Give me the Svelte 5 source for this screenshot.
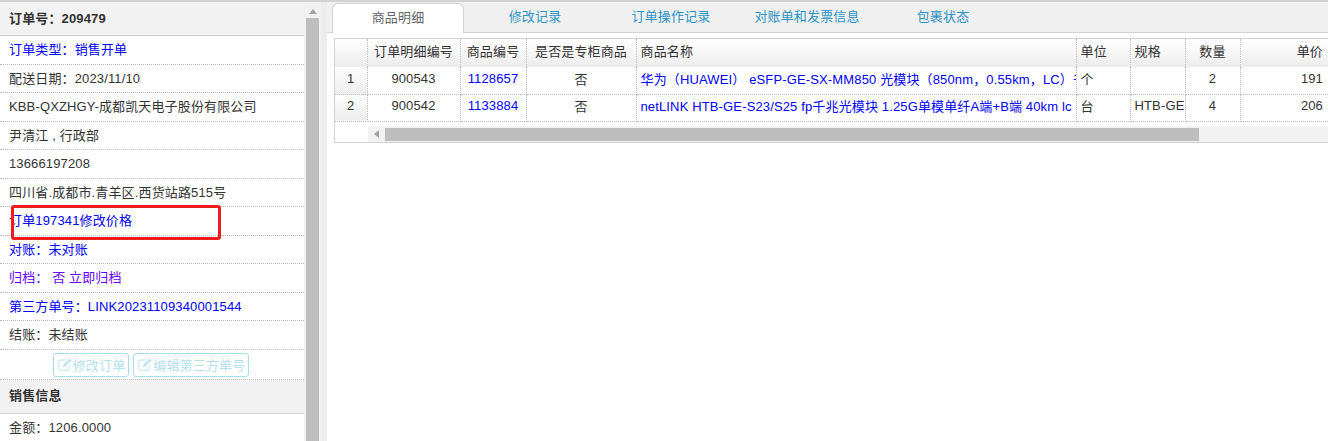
<script lang="ts">
	const rows = [
		{ text: '订单类型：销售开单', tone: 'blue' },
		{ text: '配送日期：2023/11/10' },
		{ text: 'KBB-QXZHGY-成都凯天电子股份有限公司' },
		{ text: '尹清江 , 行政部' },
		{ text: '13666197208' },
		{ text: '四川省.成都市.青羊区.西货站路515号' },
		{ text: '订单197341修改价格', tone: 'blue' },
		{ text: '对账：未对账', tone: 'blue' },
		{ text: '归档： 否 立即归档', tone: 'purple' },
		{ text: '第三方单号：LINK20231109340001544', tone: 'blue' },
		{ text: '结账：未结账' }
	];

	const tabs = ['商品明细', '修改记录', '订单操作记录', '对账单和发票信息', '包裹状态'];

	const items = [
		{
			id: '900543',
			sku: '1128657',
			name: '华为（HUAWEI） eSFP-GE-SX-MM850 光模块（850nm，0.55km，LC）千兆多模光模块',
			unit: '个',
			spec: '',
			qty: 2,
			price: 191
		},
		{
			id: '900542',
			sku: '1133884',
			name: 'netLINK HTB-GE-S23/S25 fp千兆光模块 1.25G单模单纤A端+B端 40km lc 一对',
			unit: '台',
			spec: 'HTB-GE-S23/S25',
			qty: 4,
			price: 206
		}
	];
</script>

{#snippet editIcon()}
	<svg viewBox="0 0 15 15" width="15" height="15" aria-hidden="true">
		<path d="M11.500 8.500v3.400c0 1-.7 1.600-1.600 1.600H2.600c-1 0-1.600-.6-1.600-1.600V4.600C1 3.700 1.600 3 2.600 3H8" fill="none" stroke="#cfe9f2" stroke-width="1.300" />
		<path d="M4.600 10.400 5.200 7.800 11.600 1.400 13.600 3.400 7.200 9.800Z" fill="#c4e5ef" />
	</svg>
{/snippet}

<div class="page">
	<aside class="order">
		<h2>订单号：209479</h2>
		{#each rows as row}
			<div class="row {row.tone ?? ''}">{row.text}</div>
		{/each}
		<div class="actions">
			<button type="button">{@render editIcon()}修改订单</button>
			<button type="button">{@render editIcon()}编辑第三方单号</button>
		</div>
		<h2 class="section">销售信息</h2>
		<div class="row">金额：1206.0000</div>
	</aside>

	<div class="vscroll">
		<div class="arrow-up"></div>
		<div class="vthumb"></div>
	</div>
	<div class="splitter"></div>

	<main>
		<nav>
			{#each tabs as tab, i}
				<span class="tab" class:active={i === 0}>{tab}</span>
			{/each}
		</nav>

		<div class="grid">
			<table>
				<colgroup>
					<col style="width: 32px" />
					<col style="width: 93px" />
					<col style="width: 66px" />
					<col style="width: 110px" />
					<col style="width: 440px" />
					<col style="width: 54px" />
					<col style="width: 55px" />
					<col style="width: 55px" />
					<col style="width: 88px" />
				</colgroup>
				<thead>
					<tr>
						<th class="num"></th>
						<th>订单明细编号</th>
						<th>商品编号</th>
						<th>是否是专柜商品</th>
						<th class="left">商品名称</th>
						<th class="left">单位</th>
						<th class="left">规格</th>
						<th>数量</th>
						<th class="right">单价</th>
					</tr>
				</thead>
				<tbody>
					{#each items as item, i}
						<tr>
							<td class="num">{i + 1}</td>
							<td>{item.id}</td>
							<td class="link">{item.sku}</td>
							<td>否</td>
							<td class="left link">{item.name}</td>
							<td class="left">{item.unit}</td>
							<td class="left">{item.spec}</td>
							<td>{item.qty}</td>
							<td class="right">{item.price}</td>
						</tr>
					{/each}
				</tbody>
			</table>
			<div class="hscroll">
				<div class="arrow-left"><span></span></div>
				<div class="hthumb"></div>
			</div>
		</div>
	</main>

	<div class="callout"></div>
</div>

<style>
	:global(body) {
		margin: 0;
		background: #fff;
		overflow: hidden;
	}

	.page {
		position: relative;
		display: flex;
		height: 439px;
		overflow: hidden;
		border-top: 2px solid #d2d2d2;
		font-family: 'Liberation Sans', 'Noto Sans CJK SC', sans-serif;
		font-size: 13px;
		letter-spacing: 0.14px;
		color: #333;
	}

	.order {
		flex: 0 0 304px;
		overflow: hidden;
	}

	h2 {
		box-sizing: border-box;
		height: 34px;
		margin: 0;
		padding-left: 9px;
		font-size: 13px;
		font-weight: 700;
		line-height: 33px;
		color: #333;
		background: #f2f2f2;
		border-bottom: 1px solid #d2d2d2;
	}

	.section {
		height: 34.500px;
		line-height: 31px;
	}

	.row {
		box-sizing: border-box;
		height: 28.500px;
		padding-left: 9px;
		line-height: 27px;
		white-space: nowrap;
		border-bottom: 1px dotted #bbb;
	}

	.blue {
		color: #00f;
	}

	.purple {
		color: #60f;
	}

	.actions {
		display: flex;
		justify-content: center;
		gap: 4px;
		box-sizing: border-box;
		height: 30px;
		padding: 3px 2px 0 0;
		border-bottom: 1px dotted #bbb;
	}

	button {
		display: flex;
		align-items: center;
		height: 24px;
		padding: 0 3px 0 4px;
		font: inherit;
		letter-spacing: inherit;
		color: #b3dfec;
		background: #fff;
		border: 1px solid #aadcea;
		border-radius: 3px;
	}

	.vscroll {
		position: relative;
		flex: 0 0 17px;
		background: #f1f1f1;
	}

	.arrow-up {
		width: 0;
		margin: 7px 0 0 5px;
		border: 4px solid transparent;
		border-top: 0;
		border-bottom: 5px solid #a3a3a3;
	}

	.vthumb {
		position: absolute;
		top: 16px;
		bottom: 0;
		left: 2px;
		width: 13px;
		background: #bebebe;
	}

	.splitter {
		flex: 0 0 6px;
		background: #ececec;
	}

	main {
		flex: 1;
		min-width: 0;
	}

	nav {
		display: flex;
		box-sizing: border-box;
		height: 31px;
		padding: 1px 0 0 5px;
		background: #f0f0f0;
		border-bottom: 1px solid #d2d2d2;
	}

	.tab {
		box-sizing: border-box;
		width: 136px;
		height: 30px;
		line-height: 28px;
		text-align: center;
		color: #2b93c7;
	}

	.tab.active {
		width: 132px;
		margin-right: 3px;
		color: #666;
		background: #fff;
		border: 1px solid #d2d2d2;
		border-bottom: 0;
		border-radius: 6px 6px 0 0;
	}

	.grid {
		margin: 5px 0 0 7px;
		overflow: hidden;
		border: 1px solid #d2d2d2;
		border-right: 0;
	}

	table {
		width: 993px;
		border-collapse: collapse;
		table-layout: fixed;
	}

	th,
	td {
		box-sizing: border-box;
		height: 27.500px;
		padding: 0 4px 4px;
		overflow: hidden;
		font-weight: 400;
		text-align: center;
		white-space: nowrap;
		border-right: 1px dotted #bbb;
		border-bottom: 1px dotted #bbb;
	}

	th {
		background: linear-gradient(#fff, #ececec);
		border-bottom: 0;
	}

	.num {
		background: linear-gradient(#fff, #ececec);
	}

	.left {
		text-align: left;
	}

	.right {
		padding-right: 5px;
		text-align: right;
		border-right: 0;
	}

	.link {
		color: #00f;
	}

	.hscroll {
		display: flex;
		height: 16px;
		margin: 3.500px 0 0 33px;
		background: #f1f1f1;
	}

	.arrow-left {
		display: flex;
		flex: 0 0 17px;
		align-items: center;
		justify-content: center;
	}

	.arrow-left span {
		border: 4px solid transparent;
		border-left: 0;
		border-right: 5px solid #a3a3a3;
	}

	.hthumb {
		width: 814px;
		margin: 2px 0 1px;
		background: #bebebe;
	}

	.callout {
		position: absolute;
		top: 203px;
		left: 11px;
		width: 210px;
		height: 35px;
		box-sizing: border-box;
		border: 3px solid #f01c1c;
		border-radius: 3px;
	}
</style>
